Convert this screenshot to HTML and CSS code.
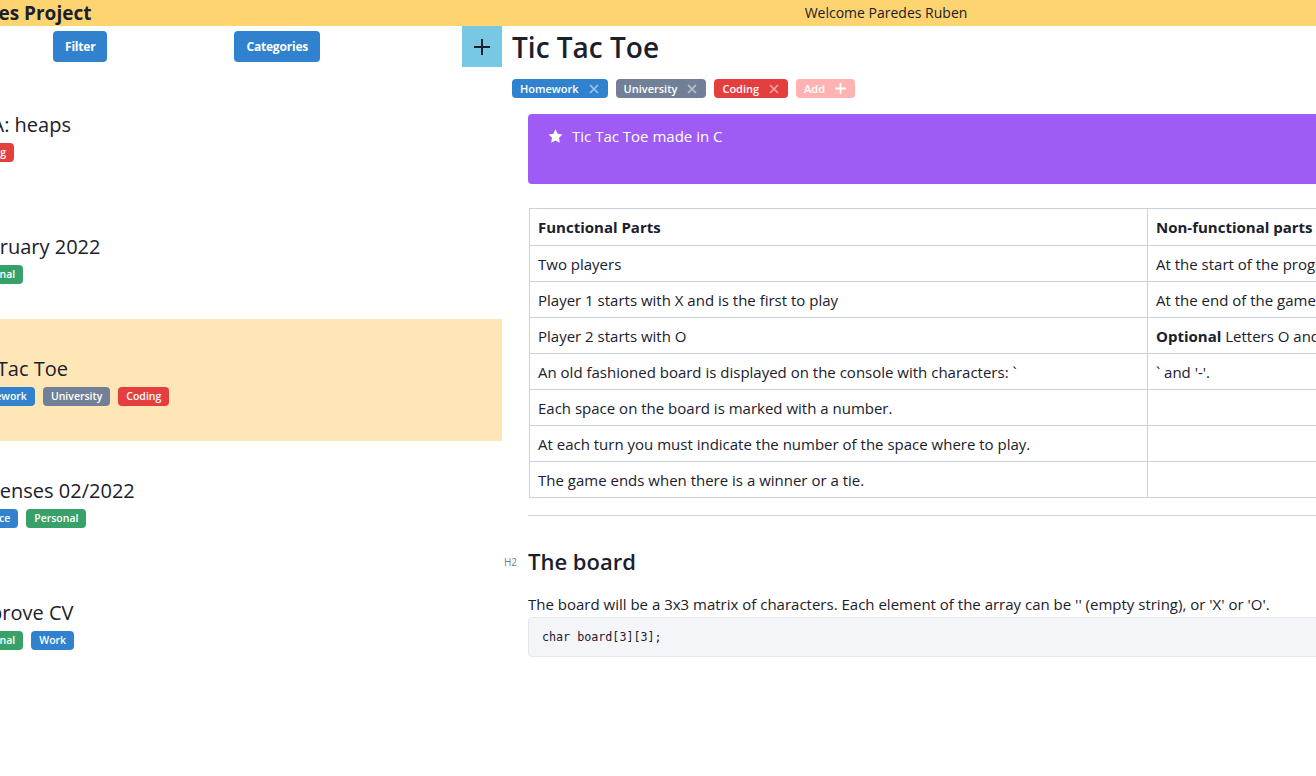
FILE: index.html
```html
<!DOCTYPE html>
<html lang="en">
<head>
<meta charset="utf-8">
<title>Notes Project</title>
<link rel="stylesheet" href="styles.css">
</head>
<body>
<div class="app">
  <header class="topbar">
    <div class="brand">Notes Project</div>
    <div class="welcome">Welcome Paredes Ruben</div>
  </header>
  <div class="layout">
    <aside class="sidebar">
      <div class="toolbar">
        <button class="btn">Filter</button>
        <button class="btn btn-cat">Categories</button>
        <button class="add-note" aria-label="New note">
          <svg width="18" height="18" viewBox="0 0 18 18"><path d="M9 1v16M1 9h16" stroke="#1a202c" stroke-width="2" fill="none"/></svg>
        </button>
      </div>
      <ul class="notes">
        <li class="note">
          <div class="note-title">DSA: heaps</div>
          <div class="tags"><span class="tag red">Coding</span></div>
        </li>
        <li class="note">
          <div class="note-title">February 2022</div>
          <div class="tags"><span class="tag green">Personal</span></div>
        </li>
        <li class="note active">
          <div class="note-title">Tic Tac Toe</div>
          <div class="tags"><span class="tag blue">Homework</span><span class="tag gray">University</span><span class="tag red">Coding</span></div>
        </li>
        <li class="note">
          <div class="note-title">Expenses 02/2022</div>
          <div class="tags"><span class="tag blue">Finance</span><span class="tag green">Personal</span></div>
        </li>
        <li class="note">
          <div class="note-title">Improve CV</div>
          <div class="tags"><span class="tag green">Personal</span><span class="tag blue">Work</span></div>
        </li>
      </ul>
    </aside>
    <main class="pane">
      <h1 class="doc-title">Tic Tac Toe</h1>
      <div class="doc-tags">
        <span class="tag tag-lg blue">Homework<svg class="x" width="10" height="10" viewBox="0 0 10 10"><path d="M1 1l8 8M9 1l-8 8"/></svg></span>
        <span class="tag tag-lg gray">University<svg class="x" width="10" height="10" viewBox="0 0 10 10"><path d="M1 1l8 8M9 1l-8 8"/></svg></span>
        <span class="tag tag-lg red">Coding<svg class="x" width="10" height="10" viewBox="0 0 10 10"><path d="M1 1l8 8M9 1l-8 8"/></svg></span>
        <span class="tag tag-lg pink">Add<svg class="plus" width="11" height="11" viewBox="0 0 11 11"><path d="M5.5 0v11M0 5.5h11"/></svg></span>
      </div>
      <div class="editor">
        <div class="callout">
          <svg class="star" width="15" height="14" viewBox="0 0 24 23"><path d="M12 0.6l3.5 7.2 7.9 1.1-5.7 5.6 1.4 7.9L12 18.7l-7.1 3.7 1.4-7.9L0.6 8.9l7.9-1.1z" fill="#fff"/></svg>
          <span>Tic Tac Toe made in C</span>
        </div>
        <table class="grid">
          <colgroup><col class="c1"><col class="c2"></colgroup>
          <thead>
            <tr><th>Functional Parts</th><th>Non-functional parts</th></tr>
          </thead>
          <tbody>
            <tr><td>Two players</td><td>At the start of the program, ask for the players' names.</td></tr>
            <tr><td>Player 1 starts with X and is the first to play</td><td>At the end of the game, show the winner.</td></tr>
            <tr><td>Player 2 starts with O</td><td><strong>Optional</strong> Letters O and X can have colors.</td></tr>
            <tr><td>An old fashioned board is displayed on the console with characters: `</td><td>` and '-'.</td></tr>
            <tr><td>Each space on the board is marked with a number.</td><td></td></tr>
            <tr><td>At each turn you must indicate the number of the space where to play.</td><td></td></tr>
            <tr><td>The game ends when there is a winner or a tie.</td><td></td></tr>
          </tbody>
        </table>
        <hr class="rule">
        <div class="heading-block">
          <span class="block-label">H2</span>
          <h2 class="h2">The board</h2>
        </div>
        <p class="para">The board will be a 3x3 matrix of characters. Each element of the array can be '' (empty string), or 'X' or 'O'.</p>
        <pre class="code"><code>char board[3][3];</code></pre>
      </div>
    </main>
  </div>
</div>
</body>
</html>
```

FILE: styles.css
```css
* { box-sizing: border-box; }

html, body {
  margin: 0;
  padding: 0;
  background: #fff;
  overflow: hidden;
}

body {
  font-family: "Open Sans", "Noto Sans", sans-serif;
  color: #1a202c;
  width: 1316px;
  height: 776px;
}

.app {
  margin-left: -37px;
  width: 1560px;
}

/* top bar */
.topbar {
  display: grid;
  grid-template-columns: 539px 768px;
  height: 26px;
  background: #fdd46f;
  align-items: center;
}

.brand {
  padding-left: 0;
  font-size: 19px;
  font-weight: 700;
  line-height: 26px;
  color: #1a202c;
}

.welcome {
  text-align: center;
  font-size: 14px;
  line-height: 26px;
  color: #1a202c;
}

.layout {
  display: flex;
  align-items: flex-start;
}

/* sidebar */
.sidebar {
  width: 539px;
  flex: none;
}

.toolbar {
  display: flex;
  align-items: flex-start;
  height: 49px;
  padding-left: 90px;
}

.btn {
  margin-top: 5px;
  height: 31px;
  padding: 0 12px;
  border: 0;
  border-radius: 4px;
  background: #3182ce;
  color: #fff;
  font-family: inherit;
  font-size: 12px;
  font-weight: 700;
  letter-spacing: -0.2px;
}

.btn-cat {
  margin-left: 127px;
}

.add-note {
  margin-left: auto;
  width: 40px;
  height: 41px;
  border: 0;
  padding: 0;
  background: #78c8e4;
  display: flex;
  align-items: center;
  justify-content: center;
}

.notes {
  list-style: none;
  margin: 0;
  padding: 0;
}

.note {
  height: 122px;
  display: flex;
  flex-direction: column;
  justify-content: center;
  gap: 4px;
}

.note.active {
  background: #fee6b7;
}

.note-title {
  font-size: 20px;
  line-height: 28px;
  color: #1a202c;
  padding-left: 3px;
}

.tags {
  display: flex;
  gap: 8px;
}

.tag {
  display: inline-flex;
  align-items: center;
  height: 19px;
  padding: 0 8px;
  border-radius: 4px;
  color: #fff;
  font-size: 10.5px;
  font-weight: 600;
  white-space: nowrap;
}

.tag.blue { background: #3182ce; }
.tag.gray { background: #718096; }
.tag.red { background: #e53e3e; }
.tag.green { background: #38a169; }
.tag.pink { background: #feb2b2; }

/* main pane */
.pane {
  flex: 1;
  padding-left: 10px;
}

.doc-title {
  margin: 4px 0 0;
  font-size: 28px;
  line-height: 34px;
  font-weight: 600;
  color: #1a202c;
}

.doc-tags {
  display: flex;
  gap: 8px;
  margin-top: 15px;
}

.tag-lg {
  padding: 0 9px 0 8px;
  font-size: 11px;
}

.tag-lg .x {
  margin-left: 10px;
  stroke: rgba(255, 255, 255, 0.55);
  stroke-width: 1.6;
  fill: none;
}

.tag-lg .plus {
  margin-left: 10px;
  stroke: #fff;
  stroke-width: 1.8;
  fill: none;
}

.editor {
  margin-left: 16px;
  width: 1000px;
}

.callout {
  margin-top: 16px;
  height: 70px;
  padding: 11px 20px 0;
  border-radius: 4px;
  background: #9e5cf5;
  color: #fff;
  display: flex;
  align-items: flex-start;
  gap: 9px;
  font-size: 15px;
  line-height: 22px;
}

.callout .star {
  margin-top: 4px;
  flex: none;
}

.grid {
  margin: 24px 0 0 1px;
  border-collapse: collapse;
  table-layout: fixed;
  width: 999px;
  font-size: 15px;
  line-height: 20px;
}

.grid .c1 { width: 618px; }

.grid th,
.grid td {
  border: 1px solid #cbd2da;
  padding: 8px 8px 7px;
  text-align: left;
  vertical-align: top;
  white-space: nowrap;
  overflow: hidden;
}

.grid th {
  font-weight: 700;
  padding-bottom: 8px;
}

.grid strong { font-weight: 700; }

.rule {
  margin: 17px 0 0;
  border: 0;
  border-top: 1px solid #cfd5de;
}

.heading-block {
  position: relative;
  margin-top: 30px;
}

.block-label {
  position: absolute;
  left: -24px;
  top: 10px;
  font-size: 10px;
  line-height: 12px;
  color: #718096;
}

.h2 {
  margin: 0;
  font-size: 22px;
  line-height: 30px;
  font-weight: 600;
  color: #1a202c;
}

.para {
  margin: 17px 0 0;
  font-size: 15px;
  line-height: 22px;
}

.code {
  margin: 2px 0 0;
  height: 40px;
  padding: 12px 13px;
  background: #f3f5f8;
  border: 1px solid #e4e8ee;
  border-radius: 4px;
  font-family: "Liberation Mono", "DejaVu Sans Mono", monospace;
  font-size: 11.7px;
  line-height: 15px;
  color: #1a202c;
}
```
